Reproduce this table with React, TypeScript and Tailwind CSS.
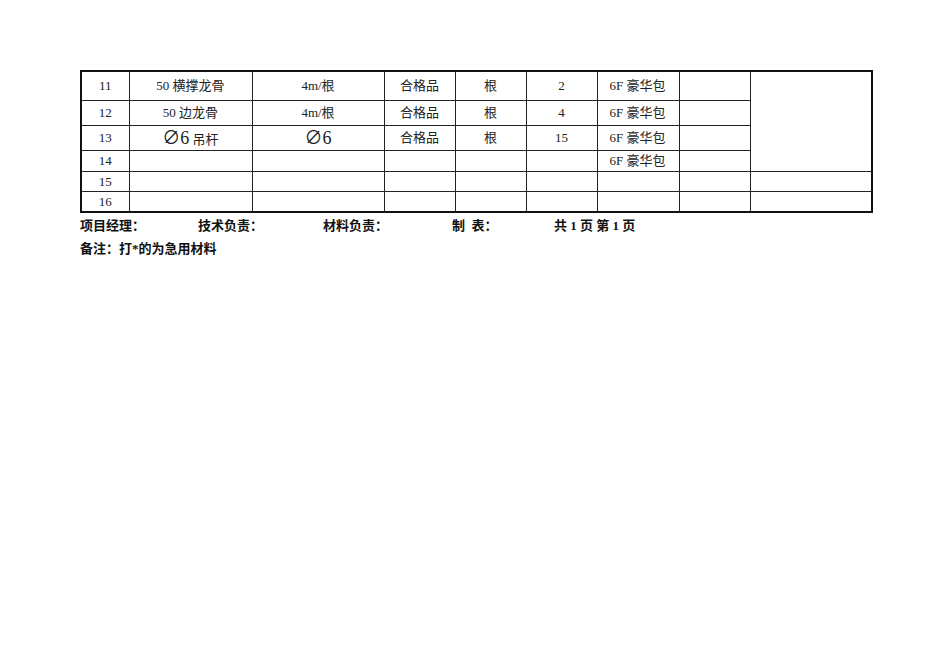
import React from "react";

type Row = {
  no: string;
  name: React.ReactNode;
  spec: React.ReactNode;
  quality: string;
  unit: string;
  qty: string;
  place: string;
};

const rows: Row[] = [
  { no: "11", name: "50 横撑龙骨", spec: "4m/根", quality: "合格品", unit: "根", qty: "2", place: "6F 豪华包" },
  { no: "12", name: "50 边龙骨", spec: "4m/根", quality: "合格品", unit: "根", qty: "4", place: "6F 豪华包" },
  {
    no: "13",
    name: (
      <>
        <span className="text-[18px]">∅6</span> 吊杆
      </>
    ),
    spec: <span className="text-[18px]">∅6</span>,
    quality: "合格品",
    unit: "根",
    qty: "15",
    place: "6F 豪华包",
  },
  { no: "14", name: "", spec: "", quality: "", unit: "", qty: "", place: "6F 豪华包" },
  { no: "15", name: "", spec: "", quality: "", unit: "", qty: "", place: "" },
  { no: "16", name: "", spec: "", quality: "", unit: "", qty: "", place: "" },
];

const heights = ["h-[29px]", "h-[25px]", "h-[25px]", "h-[21px]", "h-[20px]", "h-[21px]"];

const cell = "border border-[#222] text-center align-middle p-0 leading-none";

export default function App() {
  return (
    <div
      className="w-[950px] h-[672px] bg-white text-[#222] text-[13px]"
      style={{ fontFamily: '"Liberation Serif", "Noto Sans CJK SC", serif' }}
    >
      <div className="pt-[70px] pl-[80px]">
        <table className="table-fixed border-collapse border-2 border-[#111] w-[791px]">
          <colgroup>
            <col className="w-[48px]" />
            <col className="w-[123px]" />
            <col className="w-[132px]" />
            <col className="w-[71px]" />
            <col className="w-[71px]" />
            <col className="w-[71px]" />
            <col className="w-[82px]" />
            <col className="w-[71px]" />
            <col className="w-[122px]" />
          </colgroup>
          <tbody>
            {rows.map((r, i) => (
              <tr key={r.no} className={heights[i]}>
                <td className={`${cell} ${i >= 3 ? "align-bottom" : ""}`}>{r.no}</td>
                <td className={cell}>{r.name}</td>
                <td className={cell}>{r.spec}</td>
                <td className={cell}>{r.quality}</td>
                <td className={cell}>{r.unit}</td>
                <td className={cell}>{r.qty}</td>
                <td className={`${cell} text-left pl-[12px] ${i >= 3 ? "align-bottom pb-[1px]" : ""}`}>
                  {r.place}
                </td>
                <td className={cell}></td>
                {i === 0 && <td className={cell} rowSpan={4}></td>}
                {i >= 4 && <td className={cell}></td>}
              </tr>
            ))}
          </tbody>
        </table>

        {/* footer */}
        <div className="flex font-bold mt-[5px] leading-[15px] text-[#111]">
          <span className="w-[118px]">项目经理：</span>
          <span className="w-[125px]">技术负责：</span>
          <span className="w-[129px]">材料负责：</span>
          <span className="w-[102px]">制&nbsp;&nbsp;表：</span>
          <span>共 1 页 第 1 页</span>
        </div>
        <div className="font-bold mt-[8px] leading-[15px] text-[#111]">备注：打*的为急用材料</div>
      </div>
    </div>
  );
}
